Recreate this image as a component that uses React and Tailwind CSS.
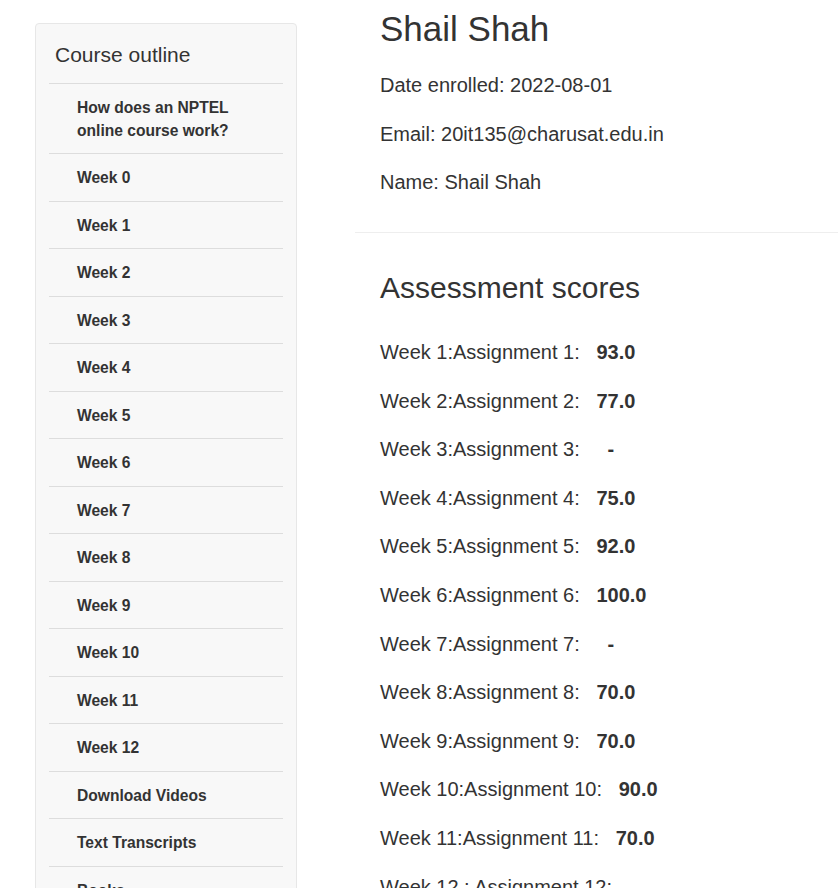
import React from "react";

const items = [
  "How does an NPTEL online course work?",
  "Week 0","Week 1","Week 2","Week 3","Week 4","Week 5","Week 6","Week 7","Week 8","Week 9","Week 10","Week 11","Week 12",
  "Download Videos","Text Transcripts","Books",
];

const scores = [
  ["Week 1:Assignment 1:", "93.0"],
  ["Week 2:Assignment 2:", "77.0"],
  ["Week 3:Assignment 3:", "-"],
  ["Week 4:Assignment 4:", "75.0"],
  ["Week 5:Assignment 5:", "92.0"],
  ["Week 6:Assignment 6:", "100.0"],
  ["Week 7:Assignment 7:", "-"],
  ["Week 8:Assignment 8:", "70.0"],
  ["Week 9:Assignment 9:", "70.0"],
  ["Week 10:Assignment 10:", "90.0"],
  ["Week 11:Assignment 11:", "70.0"],
  ["Week 12 : Assignment 12:", ""],
];

export default function App() {
  return (
    <div className="flex h-[888px] overflow-hidden bg-white text-[#333]" style={{ fontFamily: '"Liberation Sans", Arial, sans-serif' }}>
      <div className="ml-[35px] mt-[23px] w-[262px] shrink-0 self-start rounded-[4px] border border-[#e7e7e7] bg-[#f8f8f8] px-[13px] pb-[20px]">
        <div className="px-[6px] pt-[19px] pb-[16px] text-[21px] leading-[24px]">Course outline</div>
        {items.map((t) => (
          <div key={t} className="border-t border-[#dddddd] pt-[13px] pb-[11px] pl-[28px] pr-[15px] text-[15.6px] font-bold leading-[22.5px]">
            {t}
          </div>
        ))}
      </div>
      <div className="ml-[58px] flex-1">
        <div className="px-[25px] pt-[9px] pb-[16px]">
          <h1 className="mb-[23px] text-[35px] leading-[39px]">Shail Shah</h1>
          <p className="mb-[20.5px] text-[20px] leading-[28px]">Date enrolled: 2022-08-01</p>
          <p className="mb-[20.5px] text-[20px] leading-[28px]">Email: 20it135@charusat.edu.in</p>
          <p className="mb-[20px] text-[20px] leading-[28px]">Name: Shail Shah</p>
        </div>
        <div className="border-t border-[#eeeeee] px-[25px] pt-[38px]">
          <h2 className="mb-[33px] text-[30px] leading-[34px]">Assessment scores</h2>
          {scores.map(([l, v]) => (
            <p key={l} className="mb-[20.6px] text-[20px] leading-[28px] whitespace-nowrap">
              {l}
              {v && <b className="font-bold">{v === "-" ? "\u00a0\u00a0\u00a0\u00a0\u00a0-" : "\u00a0\u00a0\u00a0" + v}</b>}
            </p>
          ))}
        </div>
      </div>
    </div>
  );
}
